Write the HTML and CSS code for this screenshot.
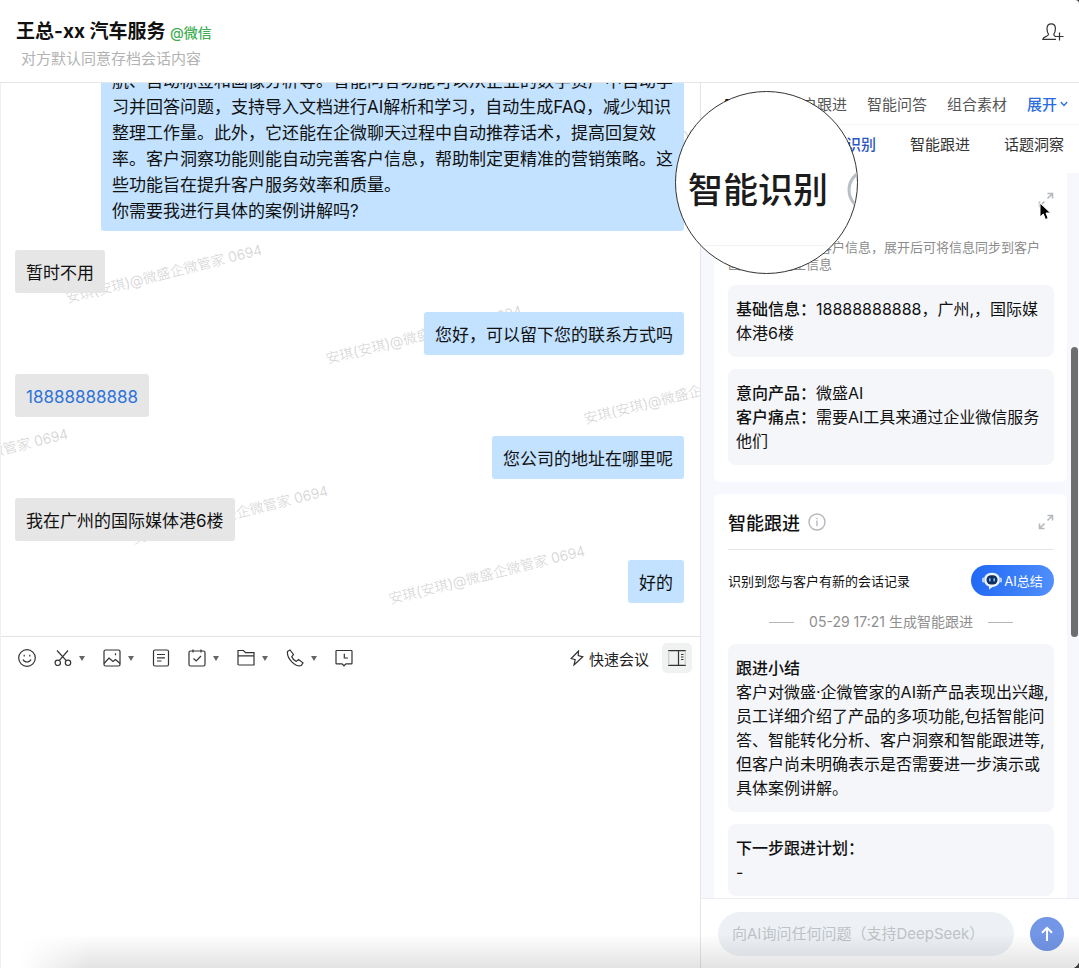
FILE: index.html
```html
<!DOCTYPE html>
<html lang="zh-CN">
<head>
  <meta charset="UTF-8">
  <title>王总-xx 汽车服务</title>
  <link rel="stylesheet" href="styles.css">
</head>
<body>
  <div class="window">
    <header class="header">
      <div>
        <h1>王总-xx 汽车服务 <span class="source">@微信</span></h1>
        <p class="notice">对方默认同意存档会话内容</p>
      </div>
      <button class="icon-btn" aria-label="添加成员">
        <svg width="22" height="18" viewBox="0 0 22 18" fill="none" stroke="#333" stroke-width="1.2">
          <path d="M14 16.4H.8c0-3 5.700-2.600 5.700-5.200C5.300 9.600 5 7.800 5 5.500 5 2.500 6.700.8 9.200.8s4.200 1.700 4.200 4.700c0 2.300-.4 4.100-1.600 5.700 0 1.200.8 1.900 2 2.500M17.500 9.500v8M13.500 13.500h8"/>
        </svg>
      </button>
    </header>

    <main class="main">
      <section class="chat">
        <div class="messages">
          <!-- 水印 -->
          <div class="watermarks" aria-hidden="true">
            <span class="wm wm1">安琪(安琪)@微盛企微管家 0694</span>
            <span class="wm wm2">安琪(安琪)@微盛企微管家 0694</span>
            <span class="wm wm3">安琪(安琪)@微盛企微管家 0694</span>
            <span class="wm wm4">安琪(安琪)@微盛企微管家 0694</span>
            <span class="wm wm5">安琪(安琪)@微盛企微管家 0694</span>
            <span class="wm wm6">安琪(安琪)@微盛企微管家 0694</span>
            <span class="wm wm7">安琪(安琪)@微盛企微管家 0694</span>
          </div>
          <div class="bubble mine">航、自动标签和画像分析等。智能问答功能可以从企业的数字资产中自动学<br>习并回答问题，支持导入文档进行AI解析和学习，自动生成FAQ，减少知识<br>整理工作量。此外，它还能在企微聊天过程中自动推荐话术，提高回复效<br>率。客户洞察功能则能自动完善客户信息，帮助制定更精准的营销策略。这<br>些功能旨在提升客户服务效率和质量。<br>你需要我进行具体的案例讲解吗?</div>
          <div class="bubble">暂时不用</div>
          <div class="bubble mine">您好，可以留下您的联系方式吗</div>
          <div class="bubble"><a href="tel:18888888888">18888888888</a></div>
          <div class="bubble mine">您公司的地址在哪里呢</div>
          <div class="bubble">我在广州的国际媒体港6楼</div>
          <div class="bubble mine">好的</div>
        </div>

        <div class="composer">
          <div class="toolbar">
            <button class="tool" aria-label="表情">
              <svg width="18" height="18" viewBox="0 0 18 18"><circle cx="9" cy="9" r="8.300"/><path d="M5 10.500c1.500 3.300 6.500 3.300 8 0M6.200 5.800v1.800M11.800 5.800v1.800"/></svg>
            </button>
            <button class="tool" aria-label="截图">
              <svg width="18" height="18" viewBox="0 0 18 18"><path d="M3 1.500l9.300 10.200M14 1.500L5.200 11.700"/><circle cx="3.800" cy="13.800" r="2.700"/><circle cx="14" cy="13.800" r="2.700"/></svg>
              <i class="caret"></i>
            </button>
            <button class="tool" aria-label="图片">
              <svg width="18" height="18" viewBox="0 0 18 18"><rect x="1" y="1" width="16" height="16" rx="1.500"/><path d="M1 14.500l5-5.500 4 3.500 2.500-2 4.500 4M12.500 4.200v2"/></svg>
              <i class="caret"></i>
            </button>
            <button class="tool" aria-label="笔记">
              <svg width="18" height="18" viewBox="0 0 18 18"><rect x="1.500" y="1" width="15" height="16" rx="1.500"/><path d="M5 5.500h8M5 8.800h8M5 12h4.500"/></svg>
            </button>
            <button class="tool" aria-label="日程">
              <svg width="18" height="18" viewBox="0 0 18 18"><rect x="1" y="2" width="16" height="15" rx="1.500"/><path d="M5 .5v3M13 .5v3M5.500 9.500l2.700 2.500 4.800-5"/></svg>
              <i class="caret"></i>
            </button>
            <button class="tool" aria-label="文件">
              <svg width="18" height="18" viewBox="0 0 18 18"><path d="M1 15.500V1.500h5.500l2 2.200H17v12.300H2.500M1 6.800h16M1 15.500c0 .5.500.5 1.500.5"/></svg>
              <i class="caret"></i>
            </button>
            <button class="tool" aria-label="电话">
              <svg width="18" height="18" viewBox="0 0 18 18"><path d="M1.500 2.500L4 1l3.500 4.500-1.700 2.200c.8 2.200 2.400 3.800 4.500 4.700l2.200-1.900 4.500 3.300-1.700 2.700C10 18.500.5 10 1.500 2.500z"/></svg>
              <i class="caret"></i>
            </button>
            <button class="tool" aria-label="聊天记录">
              <svg width="18" height="18" viewBox="0 0 18 18"><path d="M1.700 1.500h14.600c.4 0 .7.300.7.700v12c0 .4-.3.700-.7.700H11L9 16.800l-2-1.900H1.700c-.4 0-.7-.3-.7-.7v-12c0-.4.3-.7.7-.7zM9.300 4.800V9H13"/></svg>
            </button>
            <button class="meeting">
              <svg width="14" height="16" viewBox="0 0 14 16"><path d="M8.500 1L1.200 8.500l4 1.200L4 15l8.800-8.200-4.600-1.300L8.500 1z"/></svg>
              快速会议
            </button>
            <button class="panel-btn" aria-label="侧边栏">
              <svg width="18" height="16" viewBox="0 0 18 16"><path d="M0 .7h18M0 15.300h18M10.500.7v14.600"/><path class="faint" d="M.7.7v14.600M17.300.7v14.600"/><path d="M13 4.500h2.500M13 7h2.500M13 9.500h2.500"/></svg>
            </button>
          </div>
          <textarea class="editor" aria-label="输入消息"></textarea>
        </div>
      </section>

      <aside class="sidebar">
        <nav class="tabs">
          <a class="current" href="#">AI助手</a>
          <a href="#">客户跟进</a>
          <a href="#">智能问答</a>
          <a href="#">组合素材</a>
          <button class="expand">展开
            <svg width="8" height="6" viewBox="0 0 8 6" fill="none" stroke="#2b6de0" stroke-width="1.200"><path d="M.8 1L4 4.500 7.200 1"/></svg>
          </button>
        </nav>
        <nav class="subtabs">
          <a class="active" href="#">智能识别</a>
          <a href="#">智能跟进</a>
          <a href="#">话题洞察</a>
        </nav>

        <div class="cards">
          <section class="card first">
            <div class="card-title">
              <h2>智能识别</h2>
              <button class="zoom-btn" aria-label="展开智能识别">
                <svg width="16" height="16" viewBox="0 0 16 16"><path d="M9.500 6.500L14.500 1.500M9.500 1.500h5v5M6.500 9.500l-5 5M1.500 9.500v5h5"/></svg>
              </button>
            </div>
            <p class="desc">自动识别聊天中客户信息，展开后可将信息同步到客户画像以及更正信息</p>
            <div class="box"><b>基础信息：</b>18888888888，广州,，国际媒体港6楼</div>
            <div class="box"><b>意向产品：</b>微盛AI<br><b>客户痛点：</b>需要AI工具来通过企业微信服务他们</div>
          </section>

          <section class="card">
            <div class="card-title lined">
              <h2>智能跟进</h2>
              <svg class="info" width="18" height="18" viewBox="0 0 18 18"><circle cx="9" cy="9" r="8"/><path d="M9 7.500v5.500M9 4.800v1.500"/></svg>
              <button class="zoom-btn" aria-label="展开智能跟进">
                <svg width="16" height="16" viewBox="0 0 16 16"><path d="M9.500 6.500L14.500 1.500M9.500 1.500h5v5M6.500 9.500l-5 5M1.500 9.500v5h5"/></svg>
              </button>
            </div>
            <div class="summary-row">
              <span>识别到您与客户有新的会话记录</span>
              <button class="ai-btn">
                <svg width="20" height="18" viewBox="0 0 20 18">
                  <path d="M10 .8c5 0 8 2.900 8 7 0 4.200-3.100 7-7.500 7.200L7 17.500v-3C3.800 13.500 2 11 2 7.800c0-4.100 3-7 8-7z" fill="#eef4ff"/>
                  <rect x="0" y="5.500" width="3" height="5" rx="1.500" fill="#b9d2ff"/>
                  <rect x="17" y="5.500" width="3" height="5" rx="1.500" fill="#b9d2ff"/>
                  <rect x="4.500" y="3.200" width="11" height="9.300" rx="4.600" fill="#12305f"/>
                  <rect x="7" y="6" width="1.600" height="3.500" rx=".8" fill="#6fc1ff"/>
                  <rect x="11.400" y="6" width="1.600" height="3.500" rx=".8" fill="#6fc1ff"/>
                </svg>
                AI总结
              </button>
            </div>
            <div class="time">05-29 17:21 生成智能跟进</div>
            <div class="box"><b>跟进小结</b><br>客户对微盛·企微管家的AI新产品表现出兴趣,员工详细介绍了产品的多项功能,包括智能问答、智能转化分析、客户洞察和智能跟进等,但客户尚未明确表示是否需要进一步演示或具体案例讲解。</div>
            <div class="box"><b>下一步跟进计划：</b><br>-</div>
          </section>
        </div>

        <form class="ask">
          <input type="text" aria-label="提问" placeholder="向AI询问任何问题（支持DeepSeek）">
          <button type="button" aria-label="发送">
            <svg width="16" height="16" viewBox="0 0 16 16" fill="none" stroke="#fff" stroke-width="2"><path d="M8 15V2M3 6.800L8 1.800l5 5"/></svg>
          </button>
        </form>

        <div class="scroll-thumb"></div>
        <svg class="pointer" width="13" height="20" viewBox="0 0 13 20"><path d="M1 1v14l3.300-3 2.200 5.500 2.700-1.100L7 11h4.600z" fill="#000" stroke="#fff" stroke-width="1"/></svg>

        <!-- 放大镜 -->
        <div class="lens" aria-hidden="true">
          <div class="lens-title">智能识别
            <svg width="46" height="46" viewBox="0 0 46 46" fill="none" stroke="#b9bfc6" stroke-width="3"><circle cx="23" cy="23" r="20"/></svg>
          </div>
        </div>
      </aside>
    </main>
    <div class="bottom-shade"></div>
  </div>
</body>
</html>
```

FILE: styles.css
```css
* {
  box-sizing: border-box;
}

body {
  margin: 0;
  background: #3d3d3d;
  color: #111;
  font-family: Inter, "Noto Sans CJK SC", sans-serif;
  font-size: 16px;
}

h1, h2, p {
  margin: 0;
}

a {
  color: inherit;
  text-decoration: none;
}

button {
  display: flex;
  align-items: center;
  padding: 0;
  border: 0;
  background: none;
  color: inherit;
  font: inherit;
}

svg {
  display: block;
  flex: none;
}

.window {
  position: relative;
  display: flex;
  flex-direction: column;
  height: 100vh;
  overflow: hidden;
  background: #fff;
  border-radius: 0 4px 8px 0;
}

/* 顶部 */
.header {
  display: flex;
  align-items: flex-start;
  justify-content: space-between;
  padding: 18px 15px 11px 16px;
  border-bottom: 1px solid #e6e6e6;
}

.header h1 {
  font-size: 19px;
  line-height: 28px;
  font-weight: 700;
}

.source {
  color: #3fae55;
  font-size: 14px;
  font-weight: 500;
}

.notice {
  padding-left: 5px;
  color: #b3b3b3;
  font-size: 15px;
  line-height: 24px;
}

.icon-btn {
  height: 28px;
}

.main {
  display: grid;
  grid-template-columns: 1fr 379px;
  flex: 1;
  min-height: 0;
}

/* 聊天区 */
.chat {
  display: grid;
  grid-template-rows: minmax(0, 5fr) minmax(0, 3fr);
  min-width: 0;
  min-height: 0;
  border-left: 1px solid #f0f0f0;
}

.messages {
  position: relative;
  display: flex;
  flex-direction: column;
  align-items: flex-start;
  justify-content: flex-end;
  gap: 19px;
  padding: 0 16px 33px 14px;
  overflow: hidden;
}

.bubble {
  position: relative;
  padding: 10px 11px 7px;
  border-radius: 3px;
  background: #e6e6e6;
  font-size: 17px;
  line-height: 26px;
  white-space: nowrap;
}

.bubble a {
  color: #2f73d9;
}

.mine {
  align-self: flex-end;
  background: #c2e2ff;
}

.wm {
  position: absolute;
  color: #d2d2d2;
  font-size: 14px;
  font-weight: 300;
  line-height: 16px;
  white-space: nowrap;
  transform: rotate(-14deg);
  transform-origin: 0 100%;
}

.wm1 { left: 67px; top: 207px; }
.wm2 { left: 327px; top: 268px; }
.wm3 { left: 585px; top: 328px; }
.wm4 { left: -127px; top: 391px; }
.wm5 { left: 133px; top: 448px; }
.wm6 { left: 390px; top: 508px; }
.wm7 { left: 519px; top: 87px; }

/* 输入区 */
.composer {
  display: flex;
  flex-direction: column;
  border-top: 1px solid #e3e3e3;
}

.toolbar {
  display: flex;
  align-items: center;
  gap: 18px;
  padding: 6px 8px 0 17px;
}

.toolbar svg {
  fill: none;
  stroke: #333;
  stroke-width: 1.2;
}

.tool {
  gap: 7px;
}

.caret {
  border: 3px solid transparent;
  border-top: 5px solid #666;
  border-bottom: 0;
}

.meeting {
  gap: 5px;
  margin-left: auto;
  font-size: 15px;
  color: #222;
}

.panel-btn {
  justify-content: center;
  width: 30px;
  height: 30px;
  margin-left: -5px;
  border-radius: 5px;
  background: #f0f1f1;
}

.panel-btn .faint {
  stroke: #ccc;
}

.editor {
  flex: 1;
  border: 0;
  outline: 0;
  resize: none;
  background: none;
}

/* 侧边栏 */
.sidebar {
  position: relative;
  display: flex;
  flex-direction: column;
  min-height: 0;
  border-left: 1px solid #e4e4ea;
  background: #f7f8fd;
}

.tabs,
.subtabs {
  display: flex;
  align-items: center;
  justify-content: flex-end;
  background: #fff;
  font-size: 15px;
  white-space: nowrap;
}

.tabs {
  gap: 20px;
  height: 42px;
  padding: 0 11px 0 0;
  border-bottom: 1px solid #f5f5f5;
  color: #555;
}

.tabs .current {
  color: #111;
  font-weight: 700;
}

.expand {
  gap: 3px;
  color: #2b6de0;
  font-weight: 500;
}

.subtabs {
  gap: 34px;
  height: 48px;
  padding: 0 15px 12px 0;
  color: #333;
}

.subtabs .active {
  color: #2a55c5;
  font-weight: 500;
}

.cards {
  display: flex;
  flex: 1;
  flex-direction: column;
  gap: 12px;
  min-height: 0;
  padding: 0 12px 0 13px;
  overflow: hidden;
}

.card {
  display: flex;
  flex: none;
  flex-direction: column;
  gap: 12px;
  padding: 0 13px 17px 14px;
  border-radius: 6px;
  background: #fff;
}

.card.first {
  border-radius: 0 0 6px 6px;
}

.card-title {
  display: flex;
  align-items: center;
  gap: 8px;
  height: 56px;
}

.first .card-title {
  height: 54px;
}

.card-title h2 {
  font-size: 18px;
  font-weight: 500;
}

.lined {
  border-bottom: 1px solid #e6e6e6;
}

.info {
  fill: none;
  stroke: #b5b8bd;
  stroke-width: 1.4;
}

.zoom-btn {
  margin-left: auto;
}

.zoom-btn svg {
  fill: none;
  stroke: #b5b9be;
  stroke-width: 1.6;
}

.desc {
  padding-right: 8px;
  color: #8c8c8c;
  font-size: 13px;
  line-height: 17px;
}

.box {
  padding: 12px 0 12px 8px;
  border-radius: 8px;
  background: #f5f6f9;
  line-height: 24px;
}

.box b {
  font-weight: 500;
}

.summary-row {
  display: flex;
  align-items: center;
  justify-content: space-between;
  padding-top: 3px;
  font-size: 13px;
}

.ai-btn {
  justify-content: center;
  gap: 2px;
  width: 83px;
  height: 31px;
  border-radius: 16px;
  background: linear-gradient(100deg, #1f67f5, #5290fb);
  color: #fff;
}

.time {
  display: flex;
  align-items: center;
  justify-content: center;
  gap: 15px;
  padding: 4px 0 0;
  color: #8f8f8f;
  font-size: 14px;
  line-height: 20px;
}

.time::before,
.time::after {
  content: "";
  width: 25px;
  height: 1px;
  background: #b5b5b5;
}

.ask {
  display: flex;
  align-items: center;
  gap: 16px;
  height: 70px;
  padding: 0 15px 0 17px;
  border-top: 1px solid #ececf0;
  background: #fff;
}

.ask input {
  flex: 1;
  min-width: 0;
  height: 44px;
  padding: 0 14px;
  border: 0;
  border-radius: 22px;
  background: #edf1f5;
  font: inherit;
  font-size: 15px;
}

.ask input::placeholder {
  color: #bfc2c6;
}

.ask button {
  justify-content: center;
  width: 34px;
  height: 34px;
  border-radius: 50%;
  background: #7396e6;
}

/* 悬浮层 */
.scroll-thumb {
  position: absolute;
  top: 264px;
  right: 1px;
  width: 7px;
  height: 290px;
  border-radius: 4px;
  background: #6e6e6e;
}

.pointer {
  position: absolute;
  top: 119px;
  right: 27px;
}

.lens {
  position: absolute;
  top: 8px;
  left: -26px;
  width: 183px;
  height: 183px;
  overflow: hidden;
  border: 1px solid #333;
  border-radius: 50%;
  background: linear-gradient(#f3f3f3, #f3f3f3) 0 153px / 100% 1px no-repeat #fff;
}

.lens-title {
  display: flex;
  align-items: center;
  gap: 18px;
  padding: 72px 0 0 12px;
  color: #1c1c1c;
  font-size: 35px;
  font-weight: 500;
  line-height: 52px;
  white-space: nowrap;
}

.bottom-shade {
  position: absolute;
  right: 0;
  bottom: 0;
  left: 0;
  height: 34px;
  background: linear-gradient(to top, rgba(0, 0, 0, 0.11), transparent);
  -webkit-mask-image: linear-gradient(to right, transparent 20px, #000 90px);
  mask-image: linear-gradient(to right, transparent 20px, #000 90px);
  pointer-events: none;
}
```
